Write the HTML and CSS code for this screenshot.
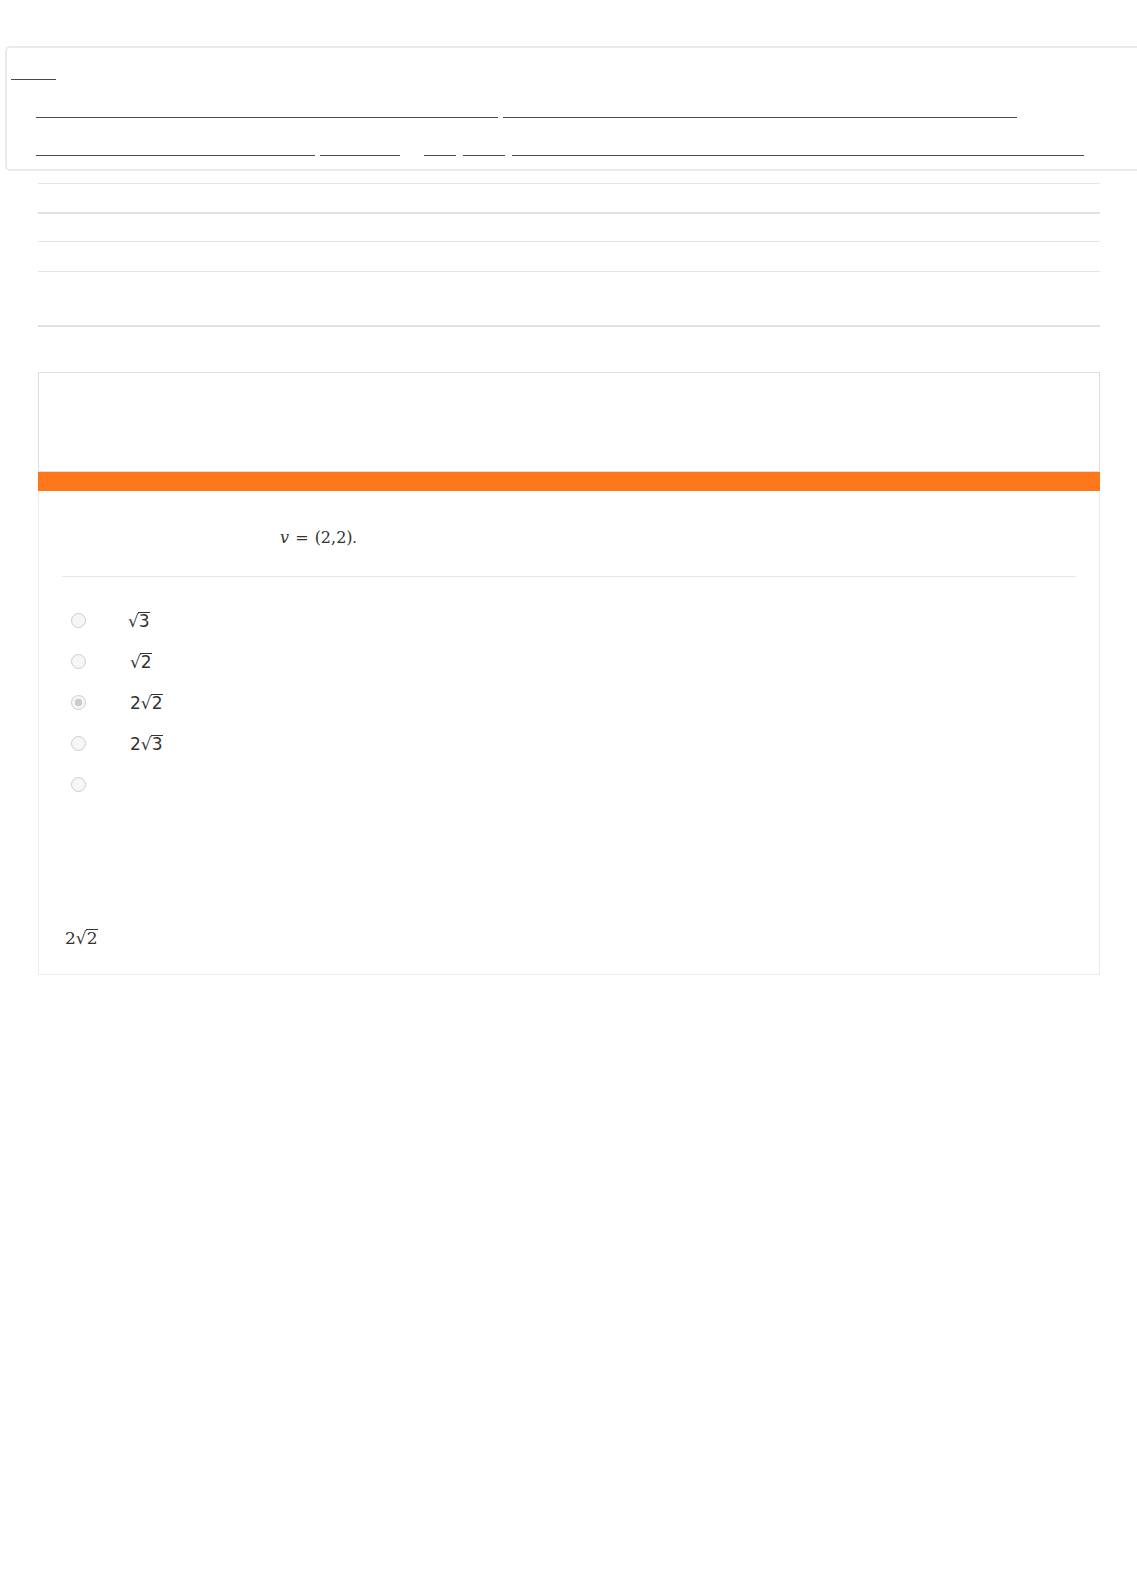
FILE: index.html
```html
<!DOCTYPE html>
<html lang="en">
<head>
<meta charset="utf-8">
<title>Quiz</title>
<link rel="stylesheet" href="styles.css">
</head>
<body>
  <header class="topbox">
    <div class="row row-crumb"><span class="link link-crumb"></span></div>
    <div class="row row-links">
      <span class="link link-a"></span>
      <span class="link link-b"></span>
    </div>
    <div class="row row-links">
      <span class="link link-c"></span>
      <span class="link link-d"></span>
      <span class="link link-e"></span>
      <span class="link link-f"></span>
      <span class="link link-g"></span>
    </div>
  </header>

  <ul class="info">
    <li class="info-row info-row-1"></li>
    <li class="info-row info-row-2"></li>
    <li class="info-row info-row-3"></li>
    <li class="info-row info-row-4"></li>
  </ul>

  <section class="card">
    <div class="card-head"></div>
    <div class="card-bar"></div>
    <div class="card-body">
      <div class="question"><span class="lead"></span><span class="math serif"><i>v</i> = (2,2)</span><span class="dot">.</span></div>
      <ul class="answers">
        <li class="answer"><span class="radio"></span><span class="label math sans"><span class="rad">√</span><span class="radicand">3</span></span></li>
        <li class="answer"><span class="radio"></span><span class="label math sans shift"><span class="rad">√</span><span class="radicand">2</span></span></li>
        <li class="answer"><span class="radio checked"></span><span class="label math sans shift">2<span class="rad">√</span><span class="radicand">2</span></span></li>
        <li class="answer"><span class="radio"></span><span class="label math sans shift">2<span class="rad">√</span><span class="radicand">3</span></span></li>
        <li class="answer"><span class="radio"></span><span class="label"></span></li>
      </ul>
      <div class="final math serif-lg">2<span class="rad">√</span><span class="radicand">2</span></div>
    </div>
  </section>
</body>
</html>
```

FILE: styles.css
```css
html, body {
  margin: 0;
  padding: 0;
  background: #ffffff;
  overflow-x: hidden;
}

body {
  font-family: "Liberation Sans", Arial, sans-serif;
  color: #333333;
}

/* ---------- top header box ---------- */
.topbox {
  box-sizing: border-box;
  margin: 46px 0 0 5px;
  width: 1160px;
  height: 125px;
  border: 2px solid #e9ecef;
  border-radius: 5px;
  padding-bottom: 13px;
  display: flex;
  flex-direction: column;
}

.row {
  display: flex;
  align-items: flex-end;
}

.row-crumb {
  height: 32px;
  padding-left: 4px;
}

.row-links {
  height: 38px;
  padding-left: 29px;
}

.link {
  display: block;
  height: 1px;
  background: #474b50;
}

.link-crumb { width: 45px; }
.link-a { width: 462px; }
.link-b { width: 514px; margin-left: 5px; }
.link-c { width: 279px; }
.link-d { width: 80px; margin-left: 5px; }
.link-e { width: 32px; margin-left: 24px; }
.link-f { width: 42px; margin-left: 7px; }
.link-g { width: 572px; margin-left: 7px; }

/* ---------- info list ---------- */
.info {
  list-style: none;
  margin: 12px 0 0 38px;
  padding: 0;
  width: 1062px;
  border-top: 1px solid #e6e6e6;
}

.info-row-1 { height: 28px; border-bottom: 2px solid #dfe2e5; }
.info-row-2 { height: 27px; border-bottom: 1px solid #e4e4e6; }
.info-row-3 { height: 29px; border-bottom: 1px solid #e4e4e6; }
.info-row-4 { height: 53px; border-bottom: 2px solid #dfe2e5; }

/* ---------- question card ---------- */
.card {
  margin: 45px 0 0 38px;
  width: 1062px;
}

.card-head {
  box-sizing: border-box;
  height: 100px;
  border: 1px solid #dedede;
}

.card-bar {
  height: 19px;
  background: #fe781b;
}

.card-body {
  border: 1px solid #ececec;
  border-top: none;
  padding: 0 23px 24px 23px;
}

.question {
  padding-top: 35px;
  padding-bottom: 26px;
  line-height: 24px;
  border-bottom: 1px solid #e8e8e8;
  display: flex;
  align-items: center;
}

.lead {
  display: inline-block;
  width: 218px;
}

.math {
  color: #333333;
}

.serif {
  font-family: "DejaVu Serif", "Liberation Serif", serif;
  font-size: 16px;
  word-spacing: 1px;
}

.serif i {
  font-style: italic;
}

.dot {
  font-family: "Liberation Serif", serif;
  font-size: 16px;
  color: #333333;
}

.sans {
  font-family: "DejaVu Sans", "Liberation Sans", sans-serif;
  font-size: 17px;
}

.serif-lg {
  font-family: "DejaVu Serif", "Liberation Serif", serif;
  font-size: 17px;
}

.rad {
  display: inline-block;
}

.radicand {
  display: inline-block;
  border-top: 1px solid #333333;
  line-height: 16px;
  margin-left: -1px;
  padding-left: 1px;
}

.answers {
  list-style: none;
  margin: 23px 0 0 0;
  padding: 0;
}

.answer {
  height: 41px;
  display: flex;
  align-items: center;
}

.radio {
  box-sizing: border-box;
  width: 15px;
  height: 15px;
  margin-left: 9px;
  border-radius: 50%;
  border: 1px solid #cdcdcd;
  background: #f6f6f6;
}

.radio.checked {
  background: radial-gradient(circle, #cccccc 0, #cccccc 3.5px, #f6f6f6 4px);
}

.label {
  margin-left: 42px;
  line-height: 20px;
}

.label.shift {
  margin-left: 44px;
}

.final {
  margin-top: 121px;
  padding-left: 3px;
  line-height: 24px;
  height: 24px;
}
```
